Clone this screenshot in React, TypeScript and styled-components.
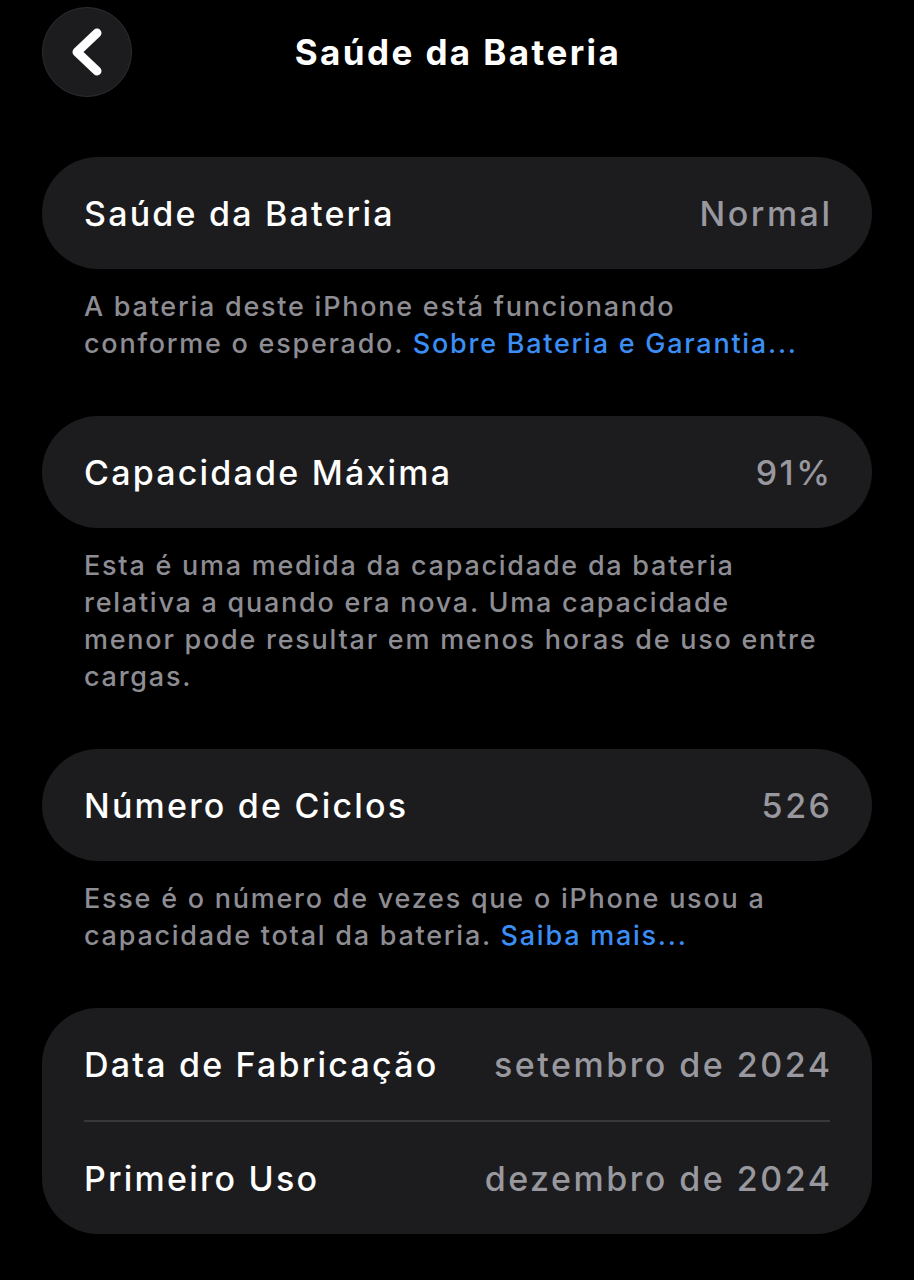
import React from 'react'
import styled, { createGlobalStyle } from 'styled-components'

const GlobalStyle = createGlobalStyle`
  html, body {
    margin: 0;
    padding: 0;
    background: #000;
  }
  body {
    font-family: Inter, "Noto Sans", "Liberation Sans", sans-serif;
    color: #fff;
    -webkit-font-smoothing: antialiased;
  }
`

const Page = styled.div`
  width: 914px;
  min-height: 1280px;
  background: #000;
  padding: 7px 42px 0;
  box-sizing: border-box;
`

const Header = styled.header`
  display: grid;
  grid-template-columns: 90px 1fr 90px;
  align-items: center;
  height: 90px;
  margin-bottom: 60px;
`

const BackButton = styled.button`
  width: 90px;
  height: 90px;
  border-radius: 50%;
  background: #1c1c1e;
  border: 1px solid #2e2e30;
  display: flex;
  align-items: center;
  justify-content: center;
  padding: 0;
  cursor: pointer;
`

const Title = styled.h1`
  margin: 0 0 0 2px;
  text-align: center;
  font-size: 35px;
  font-weight: 700;
  letter-spacing: 2.4px;
  color: #fff;
`

const Section = styled.section`
  margin-bottom: 54px;
`

const Card = styled.div`
  background: #1c1c1e;
  border-radius: 56px;
  padding: 0 42px;
`

const Row = styled.div`
  display: flex;
  align-items: center;
  justify-content: space-between;
  height: 112px;
`

const Separator = styled.div`
  height: 2px;
  background: #38383a;
`

const Label = styled.span`
  font-size: 34px;
  font-weight: 500;
  letter-spacing: 2.2px;
  color: #fff;
`

const Value = styled.span`
  font-size: 34px;
  font-weight: 500;
  letter-spacing: 2.5px;
  margin-right: -2.5px;
  color: #98989e;
`

const Footer = styled.p`
  margin: 19px 0 0;
  padding: 0 42px;
  font-size: 27px;
  line-height: 37px;
  font-weight: 500;
  letter-spacing: 1.75px;
  color: #8d8d93;
`

const Link = styled.a`
  color: #3a8ef5;
  text-decoration: none;
`

const Chevron = () => (
  <svg width="40" height="56" viewBox="0 0 40 56" fill="none">
    <path
      d="M30 9 L10 28 L30 47"
      stroke="#fff"
      strokeWidth="9"
      strokeLinecap="round"
      strokeLinejoin="round"
    />
  </svg>
)

const App = () => (
  <>
    <GlobalStyle />
    <Page>
      <Header>
        <BackButton aria-label="Voltar">
          <Chevron />
        </BackButton>
        <Title>Saúde da Bateria</Title>
        <div />
      </Header>

      <Section>
        <Card>
          <Row>
            <Label>Saúde da Bateria</Label>
            <Value>Normal</Value>
          </Row>
        </Card>
        <Footer>
          A bateria deste iPhone está funcionando
          <br />
          conforme o esperado. <Link href="#">Sobre Bateria e Garantia...</Link>
        </Footer>
      </Section>

      <Section>
        <Card>
          <Row>
            <Label>Capacidade Máxima</Label>
            <Value>91%</Value>
          </Row>
        </Card>
        <Footer>
          Esta é uma medida da capacidade da bateria relativa a quando era nova. Uma capacidade
          menor pode resultar em menos horas de uso entre cargas.
        </Footer>
      </Section>

      <Section>
        <Card>
          <Row>
            <Label>Número de Ciclos</Label>
            <Value>526</Value>
          </Row>
        </Card>
        <Footer>
          Esse é o número de vezes que o iPhone usou a capacidade total da bateria.{' '}
          <Link href="#">Saiba mais...</Link>
        </Footer>
      </Section>

      <Section>
        <Card>
          <Row>
            <Label>Data de Fabricação</Label>
            <Value>setembro de 2024</Value>
          </Row>
          <Separator />
          <Row>
            <Label>Primeiro Uso</Label>
            <Value>dezembro de 2024</Value>
          </Row>
        </Card>
      </Section>
    </Page>
  </>
)

export default App
